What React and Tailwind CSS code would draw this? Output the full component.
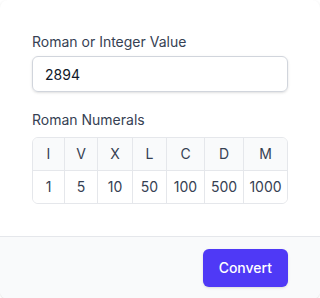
import { useState } from 'react';

const numerals = [
  { sym: 'I', val: 1 },
  { sym: 'V', val: 5 },
  { sym: 'X', val: 10 },
  { sym: 'L', val: 50 },
  { sym: 'C', val: 100 },
  { sym: 'D', val: 500 },
  { sym: 'M', val: 1000 },
];

export default function App() {
  const [value, setValue] = useState('2894');

  return (
    <div className="bg-white font-['Inter',sans-serif]">
      <div className="bg-white rounded-lg shadow-sm overflow-hidden">
        {/* Body */}
        <div className="px-8 pt-8 pb-8">
          <label className="block text-sm leading-5 text-gray-700">Roman or Integer Value</label>
          <input
            type="text"
            value={value}
            onChange={e => setValue(e.target.value)}
            className="mt-1 block w-full h-9 px-3 text-sm text-gray-900 border border-gray-300 rounded-md shadow-sm focus:outline-none"
          />

          <div className="mt-[18px] text-sm leading-5 text-gray-700">Roman Numerals</div>
          <div className="mt-[7px] border border-gray-200 rounded-md overflow-hidden text-sm text-gray-700">
            <div className="grid grid-cols-[31px_33px_35px_34px_38px_39px_1fr] bg-gray-50 border-b border-gray-200">
              {numerals.map((n, i) => (
                <div key={n.sym} className={`h-8 flex items-center justify-center ${i > 0 ? 'border-l border-gray-200' : ''}`}>
                  {n.sym}
                </div>
              ))}
            </div>
            <div className="grid grid-cols-[31px_33px_35px_34px_38px_39px_1fr] bg-white">
              {numerals.map((n, i) => (
                <div key={n.sym} className={`h-8 flex items-center justify-center ${i > 0 ? 'border-l border-gray-200' : ''}`}>
                  {n.val}
                </div>
              ))}
            </div>
          </div>
        </div>

        {/* Footer */}
        <div className="bg-gray-50 border-t border-gray-200 px-8 py-3 flex justify-end">
          <button className="h-[38px] px-4 bg-indigo-600 hover:bg-indigo-700 text-white text-sm font-medium rounded-md shadow-sm">
            Convert
          </button>
        </div>
      </div>
    </div>
  );
}
